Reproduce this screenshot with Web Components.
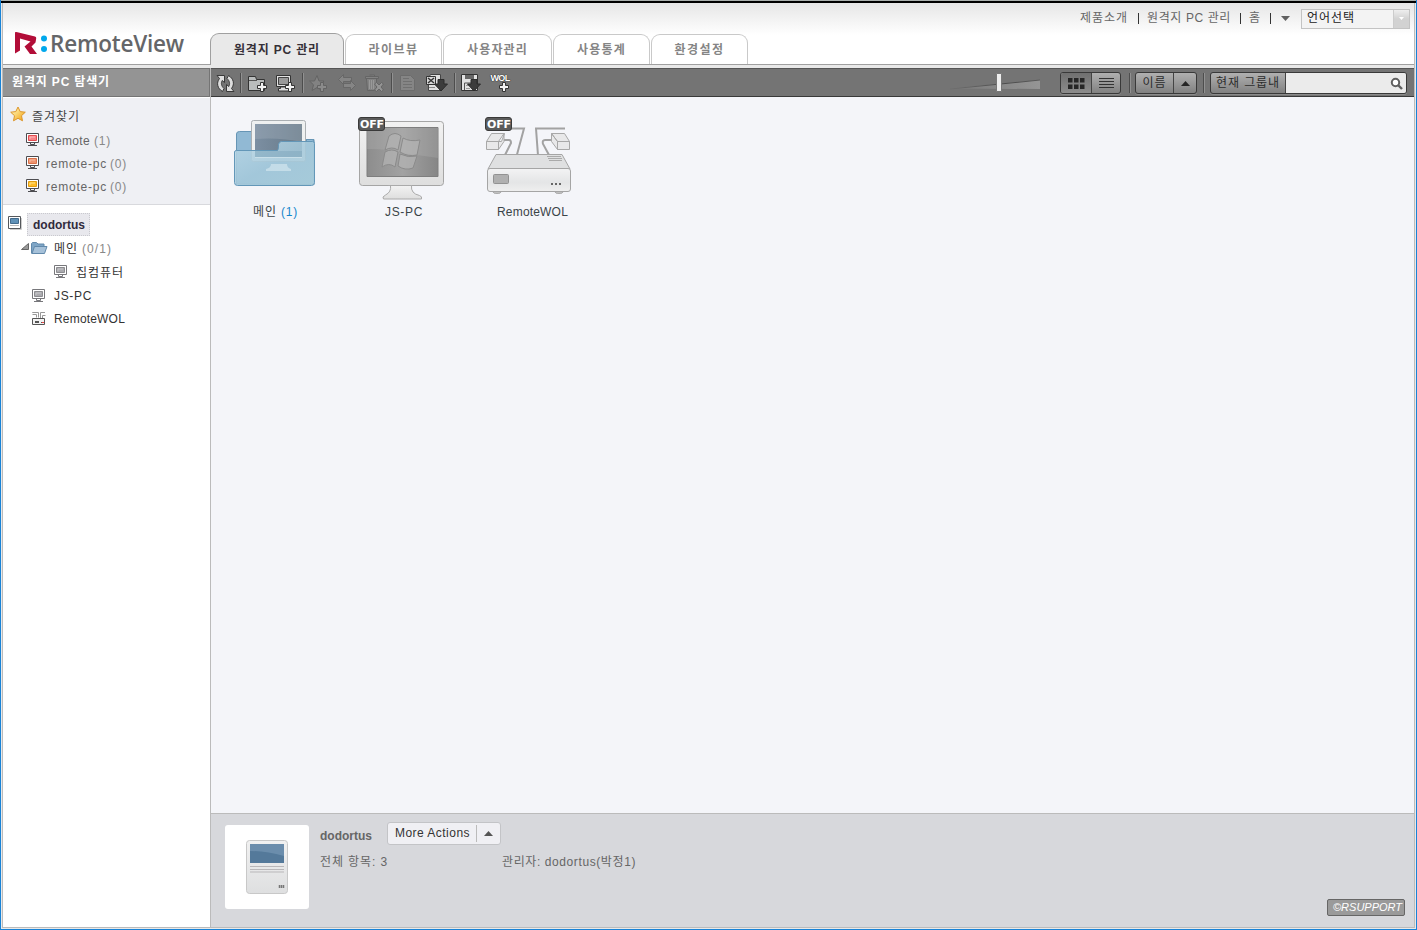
<!DOCTYPE html>
<html lang="ko">
<head>
<meta charset="utf-8">
<title>RemoteView</title>
<style>
html,body{margin:0;height:100%;overflow:hidden}
body{font:12px/16px "Liberation Sans","Noto Sans CJK KR",sans-serif;color:#444}
</style>
</head>
<body>
<rv-app></rv-app>
<script>
const define=(name,css,html,init)=>customElements.define(name,class extends HTMLElement{
  connectedCallback(){
    if(this.shadowRoot)return;
    const r=this.attachShadow({mode:'open'});
    r.innerHTML='<style>*{box-sizing:border-box}'+css+'</style>'+(typeof html==='function'?html(this):html);
    if(init)init(this,r);
  }
});

/* Icon drawings. Each entry: viewBox, then markup. */
const plus=(x,y)=>`<path d="M${x+3} ${y}h3v3h3v3h-3v3h-3v-3h-3v-3h3z" fill="#f2f2f2" stroke="#333"/>`;
const plusOff=(x,y)=>`<path d="M${x+3} ${y}h3v3h3v3h-3v3h-3v-3h-3v-3h3z" fill="#8b8b8b" stroke="#636363"/>`;
const pc=(edge,dark,fill,light)=>['0 0 14 14',`<path d="M.5.5h12v9H.5z" fill="#fff" stroke="${edge}"/><path d="M2.5 2.500h8v5h-8z" fill="${fill}" stroke="${dark}"/><path d="M4 6V4h5" stroke="${light}" fill="none"/><path d="M4.500 10v1.500h4V10M2 12.500h9" stroke="${edge}" fill="none"/>`];
const arrowDown=(x,y)=>`<path d="M${x+3} ${y}h6v4.500h3.500l-6.500 7-6.500-7h3.500z" fill="#3c3c3c" stroke="#2b2b2b"/>`;
const ICONS={
logo:['14 31 34 24',`<path d="M15 32.200Q16 31.700 17.500 32.200L35 36.500Q36.500 37 36.200 38.500L35.500 42.500L31.500 46.500L37 54H30L24.500 46.500L30.500 41.500L20 38.500V50.500L15 53.500Z" fill="#b20d38"/><circle cx="44" cy="38.500" r="3" fill="#00a8ec"/><circle cx="44" cy="49" r="3" fill="#00a8ec"/>`],
star:['10 108 16 16',`<defs><linearGradient id="a" x2="1" y2="1"><stop offset=".2" stop-color="#fff0a8"/><stop offset=".8" stop-color="#f5b02c"/></linearGradient></defs><path d="M18 108l2.200 4.600 5.100.6-3.800 3.500 1 5.100-4.500-2.500-4.500 2.500 1-5.100-3.800-3.500 5.100-.6z" fill="url(#a)" stroke="#dc962c"/>`],
red:pc('#4c4c50','#e24c50','#f78286','#ffb9ba'),
orange:pc('#4c4c50','#d8714a','#ee9470','#f8bba4'),
yellow:pc('#4c4c50','#e29c10','#ffbd28','#ffe28c'),
gray:pc('#77777b','#8c8c90','#aaaaae','#c8c8cb'),
account:['0 0 14 15',`<path d="M2 13.500h11.500V2" fill="none" stroke="#ccc"/><path d="M.5.500h12v12H.5z" fill="#fff" stroke="#55585c"/><path d="M2.500 2.500h8v5h-8z" fill="#5f91b7" stroke="#426a8c"/><path d="M2 9.500h9" stroke="#bbb"/>`],
caret:['0 1 8 8',`<path d="M7.500.500v6h-7z" fill="#999" stroke="#666"/>`],
folder:['0 0 17 13',`<path d="M.5 11.500V1.500l1-1h4l1.500 1.500h6v2" fill="#7ea5c6" stroke="#6189ab"/><path d="M1 11.500L3.500 4.500h12.500l-2.500 7z" fill="#a6c1d9" stroke="#6189ab"/>`],
wol:['0 0 14 14',`<path d="M.5 2.500h4v3M.500 0V.500h6v5M8.500 6V.500h4.500M10.500 6V3.500h3" stroke="#999" fill="none"/><path d="M.5 6.500h12v6H.5z" fill="#f2f2f2" stroke="#555"/><path d="M3 9h4v2H3z" fill="#555"/><path d="M9 10h1v1H9z" fill="#555"/><path d="M10 10h2v1h-2z" fill="#e44"/>`],
refresh:['216 73 20 20',`<g fill="#dedede" stroke="#393939"><path d="M217 75.500h7.500v7l-2.300-2c-1.400 2.500-1 5.500 1.800 8l-1.500 3c-5-3-6.500-8.500-3-13z"/><path d="M234 91.500h-7.500v-7l2.300 2c1.400-2.500 1-5.500-1.800-8l1.500-3c5 3 6.500 8.500 3 13z"/></g>`],
addFolder:['247 75 21 18',`<path d="M248.500 90.500v-14h7l1 3h8v11z" fill="#b9bcbc" stroke="#333"/><path d="M249 80.500h8" stroke="#555"/>${plus(257.5,82.500)}`],
addPc:['275 74 21 19',`<path d="M276.500 75.500h14v11h-14z" fill="#e2e2e2" stroke="#333"/><path d="M278.500 77.500h10v7h-10z" fill="#999" stroke="#444"/><path d="M280.500 87h6v1.500h2v2.500h-10v-2.500h2z" fill="#ddd" stroke="#333"/>${plus(285.5,82.500)}`],
addStar:['308 74 20 19',`<path d="M317 75.500l2 5.500h5l-3.500 3.800 1.500 5.700-5-3-5 3 1.500-5.700-4-3.800h5z" fill="#828282" stroke="#646464"/>${plusOff(317.5,82.500)}`],
swap:['337 74 20 18',`<g fill="#858585" stroke="#676767"><path d="M338.500 79.500l5-5v3h8v4h-8v3z"/><path d="M355.500 85.500l-5-5v3h-7v4h7v3z"/></g>`],
trash:['364 74 21 19',`<path d="M366.500 78.500h10v12h-9zM365.500 76.500h13v2h-13zM369.500 75h5v1.500" fill="#828282" stroke="#656565"/><path d="M369.500 80v9M371.500 80v9M373.500 80v9" stroke="#999"/><path d="M374.500 84l2-1.500 2.500 2.500 2.500-2.500 2 1.500-2.500 3 2.500 3-2 1.500-2.500-2.500-2.500 2.500-2-1.500 2.500-3z" fill="#949494" stroke="#656565"/>`],
doc:['399 74 17 18',`<path d="M400.500 75.500h10l4 4v11h-14z" fill="#858585" stroke="#6c6c6c"/><path d="M403 78.500h6M403 81.500h9M403 84.500h9M403 87.500h9" stroke="#707070"/>`],
export:['425 73 24 20',`<path d="M430.500 74.500h10v16h-12v-12z" fill="#e0e0e0" stroke="#444"/><path d="M426.500 76.500h9v8h-9z" fill="#d8d8d8" stroke="#333"/><path d="M428 78l6 5M434 78l-6 5" stroke="#333" stroke-width="1.500"/><path d="M429 87.500h6" stroke="#888"/>${arrowDown(435,79.500)}`],
save:['460 73 22 19',`<path d="M461.500 74.500h16v16h-16z" fill="#e2e2e2" stroke="#333"/><path d="M465 75h9v4h-9z" fill="#666"/><path d="M464.500 90v-7h8" fill="none" stroke="#555"/><path d="M466 85.500h4M466 88.500h4" stroke="#999"/>${arrowDown(468,79.500)}`]
};
define('rv-icon',':host{display:block;flex:none}svg{display:block;overflow:visible}',h=>{
  const [vb,m]=ICONS[h.getAttribute('name')],[,,w,ht]=vb.split(' ');
  return `<svg width="${w}" height="${ht}" viewBox="${vb}">${m}</svg>`});

/* One-line label whose tracking is tuned to fill the width in the w attribute. */
define('rv-text',':host{display:block;flex:none;white-space:nowrap}span{display:inline-block}','<span><slot></slot></span>',(h,r)=>{
  const w=+h.getAttribute('w'),s=r.querySelector('span'),n=h.textContent.length;
  h.style.width=w+'px';
  if(n>1)s.style.letterSpacing=((w-s.getBoundingClientRect().width)/n)+'px';
});

define('rv-tab',`:host{display:flex;justify-content:center;align-items:center;height:30px;margin-right:1px;border:1px solid #c9c9c9;border-bottom:0;border-radius:9px 9px 0 0;background:#fff;box-sizing:border-box;font-weight:bold;color:#858585}
:host([active]){height:32px;background:#e9e9e9;border-color:#a0a0a0;color:#353038;margin-bottom:-1px}`,'<slot></slot>',h=>{h.style.width=h.getAttribute('width')+'px'});

define('rv-header',`:host{display:flex;height:62px;box-sizing:border-box;border-bottom:1px solid #a0a0a0;background:linear-gradient(#e6e6e6,#fff 32px)}
.logo{display:flex;width:207px;padding:28px 0 0 11px;gap:2px}
.logo rv-text{font:600 22.500px/32px "Open Sans",sans-serif;color:#656669;margin-top:-3px}
.tabs{display:flex;align-items:flex-end}
.nav{margin-left:auto;display:flex;height:30px;align-items:center;color:#666;padding-right:4px}
.bar{width:1px;height:11px;background:#333;margin:0 8px 0 10px}
.select{display:flex;justify-content:space-between;width:109px;height:20px;border:1px solid #c3c3c3;background:#f3f3f3;margin-left:11px;padding-left:5px;line-height:16px;color:#222;margin-top:1px}
.drop{width:16px;border-left:1px solid #ccc;background:linear-gradient(#eee,#d2d2d2 50%);display:flex;align-items:center;justify-content:center}
svg{display:block}`,`
<div class="logo"><rv-icon name="logo"></rv-icon><rv-text w="134">RemoteView</rv-text></div>
<div class="tabs"><rv-tab active width="134"><rv-text w="86">원격지 PC 관리</rv-text></rv-tab><rv-tab width="97"><rv-text w="50">라이브뷰</rv-text></rv-tab><rv-tab width="109"><rv-text w="61">사용자관리</rv-text></rv-tab><rv-tab width="97"><rv-text w="49">사용통계</rv-text></rv-tab><rv-tab width="97"><rv-text w="50">환경설정</rv-text></rv-tab></div>
<div class="nav"><rv-text w="48">제품소개</rv-text><i class="bar"></i><rv-text w="84">원격지 PC 관리</rv-text><i class="bar" style="margin-left:9px"></i><rv-text w="12">홈</rv-text><i class="bar" style="margin-right:10px;margin-left:9px"></i><svg width="9" height="5"><path d="M0 0h9L4.500 5z" fill="#606060"/></svg>
<div class="select"><rv-text w="48">언어선택</rv-text><span class="drop"><svg width="5" height="3"><path d="M0 0h5L2.500 3z" fill="#fff"/></svg></span></div></div>`);

define('rv-row',':host{display:flex;align-items:center;box-sizing:border-box}','<slot></slot>',h=>{h.style.height=h.getAttribute('h')+'px';h.style.paddingLeft=h.getAttribute('x')+'px'});

define('rv-sidebar',`:host{display:flex;flex-direction:column;width:208px;box-sizing:border-box;border-right:1px solid #bbb;background:#fff}
.title{height:29px;box-sizing:border-box;border:1px solid #747474;border-width:1px 1px 1px 0;background:#949494;padding:5px 0 0 9px;color:#fff;font-weight:bold}
.fav{background:#eff0f4;height:108px;padding-top:6px;margin-top:0;border-top:1px solid #fff;border-bottom:1px solid #d8d9dd;color:#666}
.tree{padding-top:7px;color:#333}
.selected{border:1px dotted #c9c9ce;background:#e8e8ed;padding:3px 4px 1px 5px;font-weight:bold;color:#302b3c;line-height:17px;margin-left:5px}
.fav rv-text,.ko{padding-top:2px}
.n{color:#888}`,`
<div class="title"><rv-text w="98">원격지 PC 탐색기</rv-text></div>
<div class="fav">
<rv-row x="7" h="24"><rv-icon name="star" style="margin-top:-2px"></rv-icon><rv-text w="48" style="margin-left:6px;color:#444">즐겨찾기</rv-text></rv-row>
<rv-row x="23" h="23"><rv-icon name="red"></rv-icon><rv-text w="44" style="margin-left:6px">Remote</rv-text><rv-text class="n" w="17" style="margin-left:4px">(1)</rv-text></rv-row>
<rv-row x="23" h="23"><rv-icon name="orange"></rv-icon><rv-text w="61" style="margin-left:6px">remote-pc</rv-text><rv-text class="n" w="17" style="margin-left:3px">(0)</rv-text></rv-row>
<rv-row x="23" h="23"><rv-icon name="yellow"></rv-icon><rv-text w="61" style="margin-left:6px">remote-pc</rv-text><rv-text class="n" w="17" style="margin-left:3px">(0)</rv-text></rv-row>
</div>
<div class="tree">
<rv-row x="5" h="24"><rv-icon name="account" style="margin-top:-1px"></rv-icon><div class="selected"><rv-text w="52">dodortus</rv-text></div></rv-row>
<rv-row x="18" h="24"><rv-icon name="caret"></rv-icon><rv-icon name="folder" style="margin-left:2px"></rv-icon><rv-text class="ko" w="24" style="margin-left:6px">메인</rv-text><rv-text class="n ko" w="30" style="margin-left:4px">(0/1)</rv-text></rv-row>
<rv-row x="51" h="24"><rv-icon name="gray"></rv-icon><rv-text class="ko" w="48" style="margin-left:8px">집컴퓨터</rv-text></rv-row>
<rv-row x="29" h="23"><rv-icon name="gray"></rv-icon><rv-text w="38" style="margin-left:8px">JS-PC</rv-text></rv-row>
<rv-row x="29" h="23"><rv-icon name="wol"></rv-icon><rv-text w="71" style="margin-left:8px">RemoteWOL</rv-text></rv-row>
</div>`);

define('rv-toolbar',`:host{display:flex;align-items:flex-start;height:29px;box-sizing:border-box;border-top:1px solid #555;border-bottom:1px solid #393939;background:#747474;padding-left:5px}
rv-icon,.wol{margin-top:5px}
.sep{flex:none;width:2px;height:20px;margin-top:4px;background:#4d4d4d;border-right:1px solid #919191;box-sizing:border-box}
.wol{width:20px;display:flex;flex-direction:column;align-items:center;margin-left:8px}
.wol rv-text{font:bold 9px/9px "Liberation Sans",sans-serif;color:#fff;text-shadow:0 0 1px #222,0 0 1px #222}
.wol svg{flex:none;margin:-2px 0 0 7px}
.right{margin-left:auto;display:flex;padding:3px 7px 0 0}
.btn{display:flex;height:22px;box-sizing:border-box;border:1px solid #393939;border-radius:3px;background:linear-gradient(#b0b0b0,#818181);color:#2c2c2c;overflow:hidden;box-shadow:0 1px #8b8b8b}
.btn>*{display:flex;align-items:center;justify-content:center;box-sizing:border-box}
.on{background:linear-gradient(#707070,#8c8c8c)}
.div{border-left:1px solid #444}
.slider{margin:1px 20px 0 0}svg{display:block}`,`
<rv-icon name="refresh" style="margin-top:4px"></rv-icon><i class="sep" style="margin-left:4px"></i>
<rv-icon name="addFolder" style="margin-left:5px;margin-top:6px"></rv-icon><rv-icon name="addPc" style="margin-left:7px"></rv-icon><i class="sep" style="margin-left:6px"></i>
<rv-icon name="addStar" style="margin-left:4px"></rv-icon><rv-icon name="swap" style="margin-left:9px"></rv-icon><rv-icon name="trash" style="margin-left:7px"></rv-icon><i class="sep" style="margin-left:6px"></i>
<rv-icon name="doc" style="margin-left:6px"></rv-icon><rv-icon name="export" style="margin-left:9px;margin-top:4px"></rv-icon><i class="sep" style="margin-left:5px"></i>
<rv-icon name="save" style="margin-left:4px;margin-top:4px"></rv-icon><div class="wol"><rv-text w="19">WOL</rv-text><svg width="12" height="12" viewBox="-1 -1 12 12">${plus(.5,.5)}</svg></div>
<div class="right">
<svg class="slider" width="90" height="20" viewBox="950 73 90 20"><defs><linearGradient id="w"><stop stop-color="#777"/><stop offset="1" stop-color="#959595"/></linearGradient><linearGradient id="v"><stop stop-color="#707070"/><stop offset=".6" stop-color="#4b4b4b"/><stop offset="1" stop-color="#5a5a5a"/></linearGradient></defs><path d="M950 88.500L1040 80v9z" fill="url(#w)"/><path d="M950 88.500L1040 79.500v1L950 89.500z" fill="url(#v)"/><path d="M996.500 73.500h5v18h-5z" fill="#eee" stroke="#777"/></svg>
<div class="btn"><span class="on" style="width:30px"><svg width="17" height="11"><path d="M0 0h4.500v4.500H0zM6 0h4.500v4.500H6zM12 0h4.500v4.500h-4.500zM0 6.500h4.500v4.500H0zM6 6.500h4.500v4.500H6zM12 6.500h4.500v4.500h-4.500z" fill="#262626"/></svg></span><span class="div" style="width:29px"><svg width="15" height="11"><path d="M0 .500h15M0 3.500h15M0 6.500h15M0 9.500h15" stroke="#333"/></svg></span></div>
<i class="sep" style="margin:1px 4px 0 8px"></i>
<div class="btn"><span style="width:37px"><rv-text w="24">이름</rv-text></span><span class="div" style="width:23px"><svg width="9" height="5"><path d="M0 5h9L4.500 0z" fill="#252525"/></svg></span></div>
<i class="sep" style="margin:1px 5px 0 6px"></i>
<div class="btn" style="width:197px"><span style="width:74px"><rv-text w="64">현재 그룹내</rv-text></span><span class="div" style="flex:1;background:#ebebeb;justify-content:flex-end;padding-right:3px"><svg width="13" height="13"><circle cx="5.500" cy="5.500" r="3.700" stroke="#606060" stroke-width="2" fill="#fff"/><path d="M8 8l4 4" stroke="#606060" stroke-width="2.400"/></svg></span></div>
</div>`);

const ART={
folder:`<defs><linearGradient id="s" x2="1"><stop stop-color="#7c8fa2"/><stop offset="1" stop-color="#667988"/></linearGradient><linearGradient id="f" x2="1" y2="1"><stop stop-color="#b9d7e6"/><stop offset=".5" stop-color="#a5c9db"/><stop offset="1" stop-color="#a9cdda"/></linearGradient></defs>
<path d="M236.500 184v-50q0-2.500 3-2.500h12l3 8h59.500v45z" fill="#91b9d4" stroke="#6695b5"/><path d="M306 141.500l1-2h5q2 0 2 3" fill="#91b9d4" stroke="#6695b5"/>
<rect x="251.500" y="120.500" width="54" height="41" rx="2" fill="#eef0f0" stroke="#aaafb2"/><path d="M255 124h47v33h-47z" fill="url(#s)"/><path d="M255 139q24-2 47 3v-18h-47z" fill="#b0bac4" opacity=".3"/>
<path d="M234.500 152q0-1.500 2-1.500h41q1-.5 1-6 .5-3 3-3h31q2 0 2 2v39q0 3-3 3h-74q-3 0-3-3z" fill="url(#f)" fill-opacity=".87" stroke="#6397b8"/>
<path d="M255 151h47v6h-47z" fill="#7ca4ba" opacity=".45"/><path d="M255 157.500h47" stroke="#d2e5ed" opacity=".7"/><path d="M271 164h16q0 4 4 5v2h-25v-2q5-1 5-5" fill="#d5e8ef" opacity=".65"/>`,
pc:`<defs><linearGradient id="s" x2="1"><stop stop-color="#8d8d8d"/><stop offset=".5" stop-color="#a2a2a2"/><stop offset="1" stop-color="#868686"/></linearGradient><linearGradient id="b" x2="0" y2="1"><stop stop-color="#f2f2f2"/><stop offset="1" stop-color="#dedede"/></linearGradient></defs>
<rect x="359.500" y="121.500" width="84" height="64" rx="3" fill="url(#b)" stroke="#a5a5a5"/><path d="M367 127.500h71v49h-71z" fill="url(#s)" stroke="#7e7e7e"/><path d="M367 149q25 0 43 5l28 4v-30h-71z" fill="#bbb" opacity=".25"/>
<g fill="#b3b3b3" fill-opacity=".7" stroke="#8b8b8b"><path d="M389 136q6-5 12 0l-3 14q-6-4-13 0z"/><path d="M403 138q7 4 17 2l-3 15q-9 2-17-3z"/><path d="M385 152q7-4 13 0l-3 15q-6-5-13 0z"/><path d="M400 154q8 4 17 2l-4 12q-8 3-15-2z"/></g>
<path d="M388.500 185.500h23q-1 8 8 10 3 1 2 3.500h-38q-2-2 2-4 6-3 5-9.500z" fill="url(#b)" stroke="#aaa"/>`,
wol:`<defs><linearGradient id="b" x2="0" y2="1"><stop stop-color="#f3f3f4"/><stop offset=".6" stop-color="#e4e5e6"/><stop offset="1" stop-color="#efefef"/></linearGradient></defs>
<g fill="none" stroke="#a2a2a2" stroke-width="2"><path d="M511 128.500h13l-7 26M565 128.500h-29l2 27M503 140h6q2 0 2 3l-6 12M552 140h-7q-3 0-2 4l6 11"/></g>
<g fill="#e8e8e9" stroke="#a8a8a8"><path d="M486.500 141.500l5-8h13l-3 8zM486.500 141.500h12v8h-12zM498.500 149.500l5.500-8v-8l-5.500 8zM557.500 141.500l-6-8h13l5 8zM557.500 141.500h12v8h-12zM551.500 133.500v8l6 8v-8z"/></g>
<path d="M488 169l8-14.500h66l8 14.500z" fill="#dfe0e1" stroke="#a5a5a5"/><path d="M493 192h8q0 1.500-4 1.500t-4-1.500M555 192h8q0 1.500-4 1.500t-4-1.500" fill="#ddd" stroke="#aaa"/><rect x="487.500" y="168.500" width="83" height="23" rx="2.500" fill="url(#b)" stroke="#a5a5a5"/>
<rect x="493.500" y="174.500" width="15" height="9" rx="1" fill="#b0b0b0" stroke="#929292"/><path d="M547 156.500h14M548 158.500h14M549 160.500h13" stroke="#aaa"/><path d="M551 183h2v2h-2zM555 183h2v2h-2zM559 183h2v2h-2z" fill="#666"/>`};
const X={folder:211,pc:338,wol:465};
define('rv-tile',`:host{display:block;position:relative;width:127px;color:#3a4448}svg{display:block}
.badge{position:absolute;left:20px;top:2px;width:27px;height:14px;box-sizing:border-box;border:1px solid #393939;border-radius:3px;background:#5b5b5b;color:#fff;font:bold 11px/13px "DejaVu Sans",sans-serif;padding-left:1px}
.label{display:flex;gap:4px;margin-top:4px}`,h=>{const k=h.getAttribute('kind');return `<svg width="127" height="85" viewBox="${X[k]} 115 127 85">${ART[k]}</svg>${h.hasAttribute('off')?'<div class="badge"><rv-text w="24">OFF</rv-text></div>':''}<div class="label" style="padding-left:${h.getAttribute('lx')}px"><slot></slot></div>`});

define('rv-content',':host{display:flex;align-items:flex-start;flex:1;padding-top:18px;background:#f4f5f9}.c{color:#1687cc}',`
<rv-tile kind="folder" lx="42"><rv-text w="24">메인</rv-text><rv-text class="c" w="17">(1)</rv-text></rv-tile>
<rv-tile kind="pc" off lx="47"><rv-text w="38">JS-PC</rv-text></rv-tile>
<rv-tile kind="wol" off lx="32"><rv-text w="71">RemoteWOL</rv-text></rv-tile>`);

define('rv-details',`:host{display:flex;height:114px;box-sizing:border-box;border-top:1px solid #bbb;background:#d7d8dc;padding:11px 9px 0 14px;color:#666}
.thumb{width:84px;height:84px;border-radius:3px;background:#fff;display:flex;align-items:center;justify-content:center}
.info{margin:-4px 0 0 11px}
.line{display:flex;align-items:center;height:24px}
.more{display:flex;height:23px;box-sizing:border-box;border:1px solid #c3c4c7;border-radius:3px;background:#f0f0f4;color:#333;margin:-4px 0 0 15px;padding-left:7px;align-items:center;width:114px}
.more i{width:1px;height:17px;background:#bbb;margin:0 7px 0 6px}
.brand{margin:74px 0 0 auto;width:78px;height:17px;box-sizing:border-box;border:1px solid #666;border-radius:2px;background:#9a9a9a;color:#fff;font-style:italic;font-size:11px;line-height:15px;padding-left:5px}`,`
<div class="thumb"><svg width="42" height="54" viewBox="246 840 42 54"><defs><linearGradient id="d" x2="0" y2="1"><stop stop-color="#f1f1f1"/><stop offset="1" stop-color="#dedfe0"/></linearGradient></defs><rect x="246.500" y="840.500" width="41" height="53" rx="3" fill="url(#d)" stroke="#c8c8c8"/><path d="M250 844h34v19h-34z" fill="#54799a"/><path d="M250 851q16 0 34 5v-12h-34z" fill="#7d9fbb" opacity=".55"/><path d="M250 866.500h34M250 869.500h34M250 872h34" stroke="#b9b7b9"/><path d="M279.500 885v3M281.500 885v3M283.500 885v3" stroke="#777" stroke-width="1.500"/></svg></div>
<div class="info"><div class="line" style="height:28px"><rv-text w="52" style="font-weight:bold;padding-top:2px">dodortus</rv-text><div class="more"><rv-text w="75">More Actions</rv-text><i></i><svg width="9" height="5"><path d="M0 5h9L4.500 0z" fill="#555"/></svg></div></div>
<div class="line" style="padding-top:2px"><rv-text w="68">전체 항목: 3</rv-text><rv-text w="134" style="margin-left:114px">관리자: dodortus(박정1)</rv-text></div></div>
<div class="brand"><rv-text w="69">©RSUPPORT</rv-text></div>`);

define('rv-app',`:host{display:flex;flex-direction:column;height:930px;box-sizing:border-box;border-left:1px solid #1883d7;border-right:1px solid #1883d7;border-bottom:1px solid #1883d7;background:#e9e9e9}
.edge{height:3px;background:linear-gradient(#aab0ae 1px,#000 1px)}
.frame{display:flex;flex-direction:column;flex:1;border:solid #bbb;border-width:0 1px 1px 1px;margin:0 1px 1px 1px}
.body{display:flex;flex:1;margin-top:3px}
main{display:flex;flex-direction:column;flex:1}`,`
<div class="edge"></div><div class="frame"><rv-header></rv-header><div class="body"><rv-sidebar></rv-sidebar><main><rv-toolbar></rv-toolbar><rv-content></rv-content><rv-details></rv-details></main></div></div>`);
</script>
</body>
</html>
